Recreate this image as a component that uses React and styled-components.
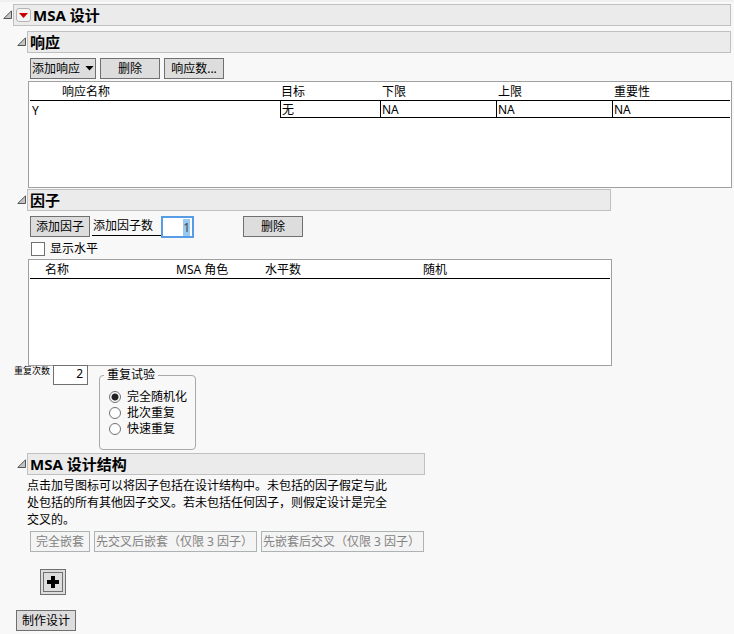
import React, { useEffect, useRef, useState } from "react";
import styled, { createGlobalStyle, css } from "styled-components";

const GlobalStyle = createGlobalStyle`
  *, *::before, *::after { box-sizing: border-box; }
  body {
    margin: 0;
    background: #f8f8f8;
    color: #000;
    font: 12px/16px "Noto Sans", "Noto Sans CJK SC", sans-serif;
  }
  button, input { font: inherit; color: inherit; }
`;

const Page = styled.main`
  border-top: 2px solid #f0f0f0;
  padding: 2px 2px 3px 3px;
`;

const Section = styled.section`
  width: ${(p) => p.$width || "auto"};
  max-width: 100%;
  margin-top: ${(p) => p.$gap || 0}px;
  margin-left: ${(p) => (p.$nested ? 14 : 0)}px;
`;

const TitleRow = styled.div`
  display: flex;
  align-items: center;
  margin-right: 1px;
`;

const Toggle = styled.button`
  flex: none;
  width: 10px;
  height: 22px;
  padding: 0;
  border: 0;
  background: none;
  display: flex;
  align-items: center;
`;

const TitleBar = styled.div`
  flex: 1;
  display: flex;
  align-items: center;
  gap: 2px;
  height: 22px;
  padding: 0 2px;
  border: 1px solid #c0c0c0;
  background: #ebebeb;
`;

const Title = styled.h2`
  margin: 0;
  font-size: 15px;
  line-height: 20px;
  font-weight: 700;
  white-space: nowrap;
`;

const MenuButton = styled.button`
  width: 15px;
  height: 14px;
  padding: 0;
  display: flex;
  align-items: center;
  justify-content: center;
  border: 1px solid #b4b4b4;
  border-radius: 3px;
  background: #f4f4f4;
`;

const Body = styled.div`
  padding-left: 11px;
`;

const Toolbar = styled.div`
  display: flex;
  align-items: flex-start;
  gap: 4px;
  padding: ${(p) => p.$top || 5}px 0 0 2px;
`;

const Button = styled.button`
  display: inline-flex;
  align-items: center;
  justify-content: ${(p) => (p.$start ? "flex-start" : "center")};
  gap: 5px;
  min-width: 60px;
  height: 21px;
  padding: 0 ${(p) => (p.$tight ? 1 : 2)}px;
  border: 1px solid #707070;
  background: #dddddd;
  line-height: 19px;
  white-space: nowrap;
  &:disabled {
    border-color: #adb2b5;
    background: #f4f4f4;
    color: #838383;
  }
`;

const NestingButton = styled(Button)`
  min-width: 163px;
  padding: 0 1px;
`;

const DeleteFactor = styled(Button)`
  margin-left: 45px;
`;

const ListBox = styled.div`
  height: 107px;
  margin-top: ${(p) => p.$gap || 0}px;
  padding: 0 1px;
  border: 1px solid #a0a0a0;
  background: #fff;
  overflow: hidden;
`;

const Table = styled.table`
  width: 100%;
  table-layout: fixed;
  border-spacing: 0;
`;

const Th = styled.th`
  width: ${(p) => (p.$width ? `${p.$width}px` : "auto")};
  height: 19px;
  padding: 2px 0 0 ${(p) => p.$indent || 0}px;
  border-bottom: 1px solid #000;
  font-weight: 400;
  line-height: 16px;
  text-align: left;
  white-space: nowrap;
`;

const Td = styled.td`
  height: 17px;
  padding: 1px 0 0 2px;
  line-height: 15px;
  ${(p) =>
    p.$framed &&
    css`
      padding-left: 1px;
      border-left: 1px solid #000;
      border-bottom: 1px solid #000;
    `}
`;

const CountField = styled.div`
  display: flex;
  align-items: flex-end;
  margin-left: -2px;
`;

const CountLabel = styled.label`
  width: 69px;
  height: 20px;
  padding: 2px 0 0 1px;
  margin-bottom: 2px;
  border-bottom: 1px solid #000;
  white-space: nowrap;
`;

const CountInput = styled.input`
  width: 33px;
  height: 22px;
  padding: 0 2px;
  border: 2px solid #569de5;
  outline: 0;
  background: #fff;
  text-align: right;
  &::selection { background: #99c9ef; color: #444; }
`;

const CheckLabel = styled.label`
  display: flex;
  align-items: center;
  gap: 5px;
  height: 21px;
  padding-left: 3px;
`;

const CheckBox = styled.input`
  appearance: none;
  width: 14px;
  height: 14px;
  margin: 0;
  border: 1px solid #707070;
  background: #fff;
  &:checked { background: #707070; box-shadow: inset 0 0 0 2px #fff; }
`;

const Replicates = styled.div`
  display: flex;
  align-items: flex-start;
  margin-top: -1px;
  padding-left: 11px;
`;

const SmallLabel = styled.label`
  width: 39px;
  font-size: 9px;
  line-height: 12px;
  white-space: nowrap;
`;

const RepInput = styled.input`
  width: 35px;
  height: 20px;
  padding: 0 4px 4px;
  border: 1px solid #707070;
  background: #fff;
  text-align: right;
`;

const Group = styled.fieldset`
  min-width: 97px;
  margin: 2px 0 0 11px;
  padding: 6px 7px 12px 9px;
  border: 1px solid #a8a8a8;
  border-radius: 4px;
`;

const Legend = styled.legend`
  margin-left: -5px;
  padding: 0 3px;
  line-height: 16px;
`;

const RadioLabel = styled.label`
  display: flex;
  align-items: center;
  gap: 6px;
  height: 16px;
  white-space: nowrap;
`;

const Radio = styled.input`
  appearance: none;
  width: 12px;
  height: 12px;
  margin: 0;
  border: 1px solid #707070;
  border-radius: 50%;
  background: #fff;
  &:checked { background: radial-gradient(circle, #222 0 3px, #fff 4px); }
`;

const Note = styled.p`
  max-width: 370px;
  margin: 2px 0 0 -1px;
  line-height: 17px;
`;

const AddNode = styled.button`
  display: flex;
  align-items: center;
  justify-content: center;
  width: 26px;
  height: 26px;
  margin: 17px 0 0 12px;
  padding: 0;
  border: 1px solid #707070;
  outline: 1px solid #707070;
  outline-offset: -4px;
  background: #dddddd;
`;

const Footer = styled.div`
  padding: 15px 0 0 13px;
`;

function Outline({ title, menu, children, ...layout }) {
  const [open, setOpen] = useState(true);
  return (
    <Section {...layout}>
      <TitleRow>
        <Toggle aria-label={title} aria-expanded={open} onClick={() => setOpen(!open)}>
          <svg width="10" height="10" viewBox="0 0 10 10">
            <path d="M8.5 0.8V8.5H0.8Z" fill="#c4c4c4" stroke="#555" strokeWidth="1" />
          </svg>
        </Toggle>
        <TitleBar>
          {menu && (
            <MenuButton aria-label="菜单" aria-haspopup="menu">
              <svg width="9" height="5" viewBox="0 0 9 5">
                <path d="M0 0H9L4.5 5Z" fill="#c80000" />
              </svg>
            </MenuButton>
          )}
          <Title>{title}</Title>
        </TitleBar>
      </TitleRow>
      {open && children}
    </Section>
  );
}

const limits = ["无", "NA", "NA", "NA"];
const repeatModes = ["完全随机化", "批次重复", "快速重复"];

export default function App() {
  const countRef = useRef(null);
  useEffect(() => {
    countRef.current.focus();
    countRef.current.select();
  }, []);

  return (
    <>
      <GlobalStyle />
      <Page>
        <Outline title="MSA 设计" menu>
          <Outline title="响应" $nested $gap={5}>
            <Body>
              <Toolbar>
                <Button $tight aria-haspopup="menu">
                  添加响应
                  <svg width="9" height="5" viewBox="0 0 9 5">
                    <path d="M0.5 0H8.5L4.5 4.5Z" />
                  </svg>
                </Button>
                <Button>删除</Button>
                <Button>响应数...</Button>
              </Toolbar>
              <ListBox $gap={2}>
                <Table>
                  <thead>
                    <tr>
                      <Th $width={250} $indent={32}>响应名称</Th>
                      <Th $width={100} $indent={1}>目标</Th>
                      <Th $width={116} $indent={2}>下限</Th>
                      <Th $width={116} $indent={2}>上限</Th>
                      <Th $indent={2}>重要性</Th>
                    </tr>
                  </thead>
                  <tbody>
                    <tr>
                      <Td>Y</Td>
                      {limits.map((value, i) => (
                        <Td key={i} $framed>{value}</Td>
                      ))}
                    </tr>
                  </tbody>
                </Table>
              </ListBox>
            </Body>
          </Outline>

          <Outline title="因子" $nested $gap={1} $width="595px">
            <Body>
              <Toolbar>
                <Button>添加因子</Button>
                <CountField>
                  <CountLabel htmlFor="factor-count">添加因子数</CountLabel>
                  <CountInput id="factor-count" ref={countRef} defaultValue="1" />
                </CountField>
                <DeleteFactor>删除</DeleteFactor>
              </Toolbar>
              <CheckLabel>
                <CheckBox type="checkbox" />
                显示水平
              </CheckLabel>
              <ListBox>
                <Table>
                  <thead>
                    <tr>
                      <Th $width={146} $indent={15}>名称</Th>
                      <Th $width={89}>MSA 角色</Th>
                      <Th $width={158}>水平数</Th>
                      <Th>随机</Th>
                    </tr>
                  </thead>
                </Table>
              </ListBox>
            </Body>
          </Outline>

          <Replicates>
            <SmallLabel htmlFor="replicates">重复次数</SmallLabel>
            <RepInput id="replicates" defaultValue="2" />
            <Group>
              <Legend>重复试验</Legend>
              {repeatModes.map((mode, i) => (
                <RadioLabel key={mode}>
                  <Radio type="radio" name="repeat-mode" defaultChecked={i === 0} />
                  {mode}
                </RadioLabel>
              ))}
            </Group>
          </Replicates>

          <Outline title="MSA 设计结构" $nested $gap={3} $width="409px">
            <Body>
              <Note>
                点击加号图标可以将因子包括在设计结构中。未包括的因子假定与此处包括的所有其他因子交叉。若未包括任何因子，则假定设计是完全交叉的。
              </Note>
              <Toolbar $top={3}>
                <Button disabled>完全嵌套</Button>
                <NestingButton $start disabled>先交叉后嵌套（仅限 3 因子）</NestingButton>
                <NestingButton $start disabled>先嵌套后交叉（仅限 3 因子）</NestingButton>
              </Toolbar>
              <AddNode aria-label="添加">
                <svg width="12" height="12" viewBox="0 0 12 12">
                  <path d="M4 0H8V4H12V8H8V12H4V8H0V4H4Z" />
                </svg>
              </AddNode>
            </Body>
          </Outline>

          <Footer>
            <Button>制作设计</Button>
          </Footer>
        </Outline>
      </Page>
    </>
  );
}
